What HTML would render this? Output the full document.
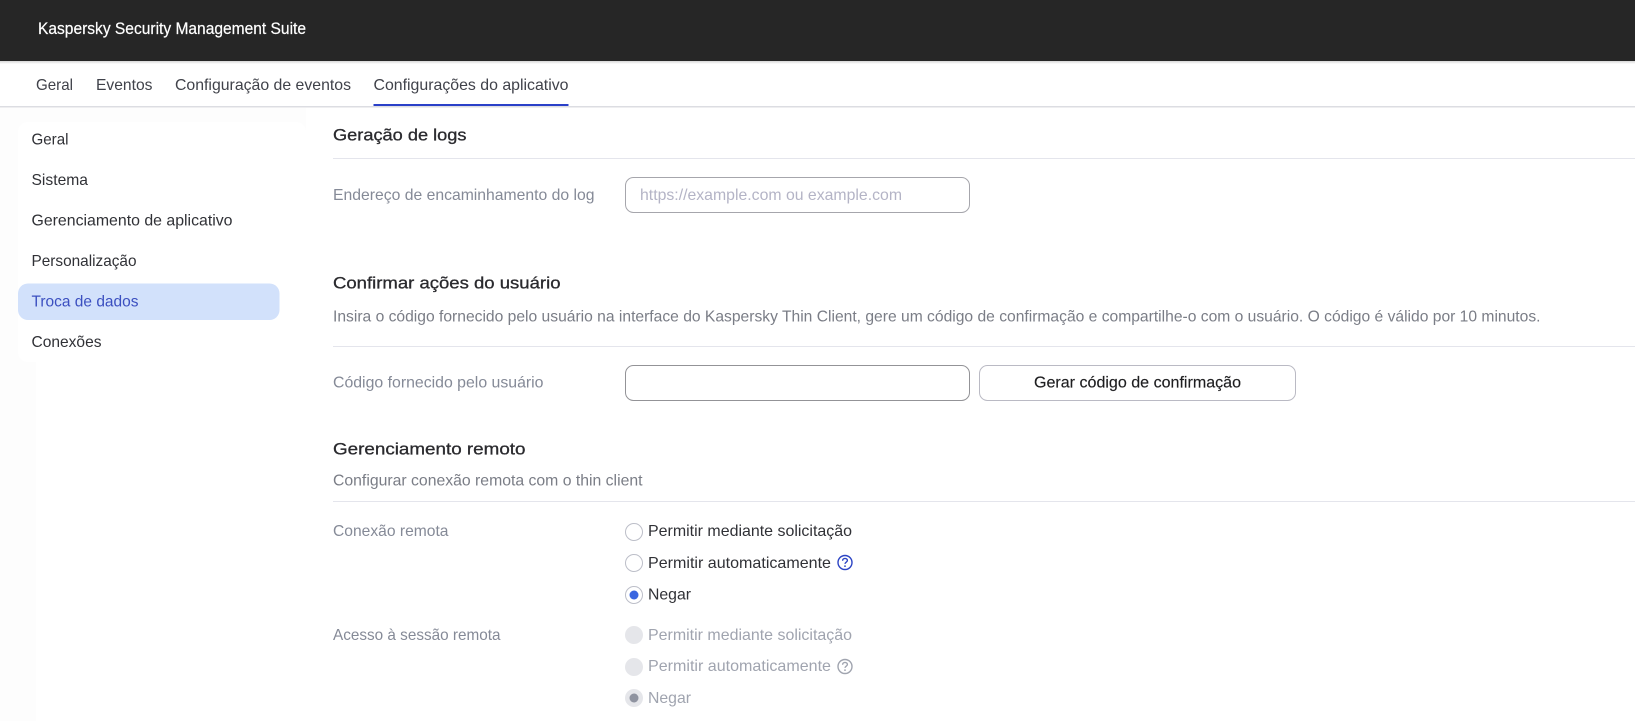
<!DOCTYPE html>
<html lang="pt">
<head>
<meta charset="utf-8">
<title>Kaspersky Security Management Suite</title>
<style>
html,body{margin:0;padding:0;width:1635px;height:721px;overflow:hidden;background:#fff}
svg{display:block}
text{font-family:"Liberation Sans",sans-serif;font-size:15.6px}
.d{fill:#303136}
.t{fill:#40424a}
.l{fill:#858a97}
.s{fill:#7a7d86}
.h{fill:#2a2a2e;font-size:16.5px;stroke:#2a2a2e;stroke-width:.3px}
.m{fill:#a0a4af}
</style>
</head>
<body>
<svg width="1635" height="721" viewBox="0 0 1635 721" xmlns="http://www.w3.org/2000/svg">
<defs>
<linearGradient id="sh" x1="0" y1="0" x2="0" y2="1"><stop offset="0" stop-color="#d6d6d6"/><stop offset="1" stop-color="#fff"/></linearGradient>
<g id="q"><circle cx="0" cy="0" r="7" fill="none" stroke-width="1.4"/><path d="M-2.4-1.8C-2.4-3.3-1.3-4.1 0-4.1C1.4-4.1 2.4-3.2 2.4-2C2.4-.3 0-.3 0 1.4" fill="none" stroke-width="1.4"/><circle cx="0" cy="3.6" r=".9" stroke="none"/></g>
</defs>

<!-- header -->
<rect x="0" y="0" width="1635" height="61" fill="#262626"/>
<rect x="0" y="61" width="1635" height="3" fill="url(#sh)"/>
<text x="38" y="34" textLength="268" lengthAdjust="spacingAndGlyphs" fill="#fff" stroke="#fff" stroke-width=".2" style="font-size:16.2px">Kaspersky Security Management Suite</text>

<!-- left faint backdrop -->
<rect x="0" y="108" width="36" height="613" fill="#fdfdfd"/>
<rect x="0" y="108" width="306" height="26" fill="#fdfdfd"/>
<rect x="18" y="122" width="288" height="240" rx="10" fill="#fff"/>

<!-- tabs -->
<text class="t" x="36" y="90" textLength="37" lengthAdjust="spacingAndGlyphs">Geral</text>
<text class="t" x="96" y="90" textLength="56.5" lengthAdjust="spacingAndGlyphs">Eventos</text>
<text class="t" x="175" y="90" textLength="176" lengthAdjust="spacingAndGlyphs">Configuração de eventos</text>
<text class="t" x="373.500" y="90" textLength="195" lengthAdjust="spacingAndGlyphs">Configurações do aplicativo</text>
<rect x="0" y="106" width="1635" height="1.500" fill="#dcdde2"/>
<rect x="373.500" y="104" width="195" height="2" fill="#2a40c8"/>

<!-- sidebar -->
<text class="d" x="31.500" y="144.500" textLength="37" lengthAdjust="spacingAndGlyphs">Geral</text>
<text class="d" x="31.500" y="185" textLength="56.500" lengthAdjust="spacingAndGlyphs">Sistema</text>
<text class="d" x="31.500" y="225.500" textLength="201" lengthAdjust="spacingAndGlyphs">Gerenciamento de aplicativo</text>
<text class="d" x="31.500" y="266" textLength="105" lengthAdjust="spacingAndGlyphs">Personalização</text>
<rect x="18" y="283.500" width="261.500" height="36.500" rx="10" fill="#d2e1fb"/>
<text x="31.500" y="306.500" textLength="107" lengthAdjust="spacingAndGlyphs" fill="#3b4fc0">Troca de dados</text>
<text class="d" x="31.500" y="347" textLength="70" lengthAdjust="spacingAndGlyphs">Conexões</text>

<!-- section 1 -->
<text class="h" x="333" y="140.500" textLength="133.500" lengthAdjust="spacingAndGlyphs">Geração de logs</text>
<rect x="333" y="158" width="1302" height="1" fill="#e4e5ec"/>
<text class="l" x="333" y="200" textLength="261.500" lengthAdjust="spacingAndGlyphs">Endereço de encaminhamento do log</text>
<rect x="625.500" y="177.500" width="344" height="35" rx="8" fill="#fff" stroke="#a6a6ac"/>
<text x="640" y="200" textLength="262" lengthAdjust="spacingAndGlyphs" fill="#b4b4c6">https://example.com ou example.com</text>

<!-- section 2 -->
<text class="h" x="333" y="288.500" textLength="227.500" lengthAdjust="spacingAndGlyphs">Confirmar ações do usuário</text>
<text class="s" x="333" y="321.500" textLength="1207.500" lengthAdjust="spacingAndGlyphs">Insira o código fornecido pelo usuário na interface do Kaspersky Thin Client, gere um código de confirmação e compartilhe-o com o usuário. O código é válido por 10 minutos.</text>
<rect x="333" y="346" width="1302" height="1" fill="#e4e5ec"/>
<text class="l" x="333" y="387.500" textLength="210.500" lengthAdjust="spacingAndGlyphs">Código fornecido pelo usuário</text>
<rect x="625.500" y="365.500" width="344" height="35" rx="8" fill="#fff" stroke="#939397"/>
<rect x="979.500" y="365.500" width="316" height="35" rx="8" fill="#fff" stroke="#babac4"/>
<text x="1034" y="387.500" textLength="207" lengthAdjust="spacingAndGlyphs" fill="#1e1e20" stroke="#1e1e20" stroke-width=".15">Gerar código de confirmação</text>

<!-- section 3 -->
<text class="h" x="333" y="454.500" textLength="192.500" lengthAdjust="spacingAndGlyphs">Gerenciamento remoto</text>
<text class="s" x="333" y="485.500" textLength="309.500" lengthAdjust="spacingAndGlyphs">Configurar conexão remota com o thin client</text>
<rect x="333" y="501" width="1302" height="1" fill="#e4e5ec"/>

<text class="l" x="333" y="536" textLength="115.500" lengthAdjust="spacingAndGlyphs">Conexão remota</text>
<circle cx="634" cy="532" r="8.500" fill="#fff" stroke="#bcbec8"/>
<text class="d" x="648" y="536" textLength="204" lengthAdjust="spacingAndGlyphs">Permitir mediante solicitação</text>
<circle cx="634" cy="563" r="8.500" fill="#fff" stroke="#bcbec8"/>
<text class="d" x="648" y="568" textLength="183" lengthAdjust="spacingAndGlyphs">Permitir automaticamente</text>
<use href="#q" x="845" y="562.500" stroke="#2c44c4" fill="#2c44c4"/>
<circle cx="634" cy="595" r="8.500" fill="#fff" stroke="#bcbec8"/>
<circle cx="634" cy="595" r="4.500" fill="#3a66e0"/>
<text class="d" x="648" y="599.500" textLength="43" lengthAdjust="spacingAndGlyphs">Negar</text>

<text class="l" x="333" y="640" textLength="167.500" lengthAdjust="spacingAndGlyphs">Acesso à sessão remota</text>
<circle cx="634" cy="635" r="9" fill="#e5e6ea"/>
<text class="m" x="648" y="640" textLength="204" lengthAdjust="spacingAndGlyphs">Permitir mediante solicitação</text>
<circle cx="634" cy="667" r="9" fill="#e5e6ea"/>
<text class="m" x="648" y="671" textLength="183" lengthAdjust="spacingAndGlyphs">Permitir automaticamente</text>
<use href="#q" x="845" y="666.500" stroke="#a0a4af" fill="#a0a4af"/>
<circle cx="634" cy="698" r="9" fill="#e5e6ea"/>
<circle cx="634" cy="698" r="4.500" fill="#8f93a0"/>
<text class="m" x="648" y="703" textLength="43" lengthAdjust="spacingAndGlyphs">Negar</text>
</svg>
</body>
</html>
